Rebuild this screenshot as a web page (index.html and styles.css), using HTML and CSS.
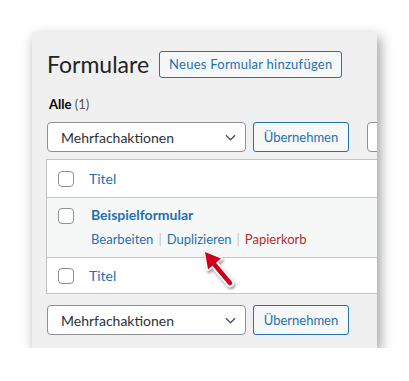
FILE: index.html
```html
<!DOCTYPE html>
<html lang="de">
  <head>
    <meta charset="UTF-8" />
    <meta name="viewport" content="width=device-width, initial-scale=1.0" />
    <title>Formulare</title>
    <link rel="stylesheet" href="styles.css">
  </head>
  <body>
    <div class="page">
      <div class="panel">
        <div class="title-row">
          <h1 class="title">Formulare</h1>
          <a class="title-action" href="#">Neues Formular hinzufügen</a>
        </div>

        <div class="filters">
          <span class="current">Alle</span> <span class="count">(1)</span>
        </div>

        <div class="toolbar">
          <div class="select">
            <span>Mehrfachaktionen</span>
            <svg class="chevron" viewBox="0 0 12 7" fill="none" stroke="currentColor" stroke-width="1.6">
              <path d="M1 1l5 5 5-5" />
            </svg>
          </div>
          <button class="button">Übernehmen</button>
          <div class="cut-box"></div>
        </div>

        <div class="list">
          <div class="list-row list-head">
            <span class="check"></span>
            <a class="column-link" href="#">Titel</a>
          </div>
          <div class="list-row list-item">
            <span class="check"></span>
            <div class="item-body">
              <a class="item-title" href="#">Beispielformular</a>
              <div class="row-actions">
                <a href="#">Bearbeiten</a><span class="sep">|</span><a href="#">Duplizieren</a><span class="sep">|</span><a class="trash" href="#">Papierkorb</a>
              </div>
            </div>
          </div>
          <div class="list-row list-foot">
            <span class="check"></span>
            <a class="column-link" href="#">Titel</a>
          </div>
        </div>

        <div class="toolbar toolbar-bottom">
          <div class="select">
            <span>Mehrfachaktionen</span>
            <svg class="chevron" viewBox="0 0 12 7" fill="none" stroke="currentColor" stroke-width="1.6">
              <path d="M1 1l5 5 5-5" />
            </svg>
          </div>
          <button class="button">Übernehmen</button>
        </div>

        <svg class="pointer" viewBox="0 0 50 50" width="50" height="50">
          <defs>
            <filter id="shade" x="-30%" y="-30%" width="160%" height="160%">
              <feDropShadow dx="1" dy="2" stdDeviation="1.5" flood-color="#000" flood-opacity="0.45" />
            </filter>
          </defs>
          <g filter="url(#shade)">
            <line x1="24" y1="24" x2="40" y2="43" stroke="#fff" stroke-width="8" stroke-linecap="round" />
            <polygon points="15,12 31,18.5 18,29.5" fill="#fff" stroke="#fff" stroke-width="3" stroke-linejoin="round" />
            <line x1="24" y1="24" x2="40" y2="43" stroke="#d0021b" stroke-width="4.5" stroke-linecap="round" />
            <polygon points="15,12 31,18.5 18,29.5" fill="#d0021b" />
          </g>
        </svg>
      </div>
    </div>
  </body>
</html>
```

FILE: styles.css
```css
* {
  box-sizing: border-box;
}

body {
  margin: 0;
  background: #fff;
  font-family: Lato, "Open Sans", sans-serif;
  font-size: 13px;
  color: #1d2327;
}

a {
  color: #2271b1;
  text-decoration: none;
}

.page {
  padding: 32px 0 0 32px;
}

.panel {
  position: relative;
  width: 345px;
  height: 316px;
  padding: 19px 0 0 15px;
  background: #f0f0f1;
  box-shadow: 3px 5px 12px rgba(0, 0, 0, 0.4);
  overflow: hidden;
}

.title-row {
  display: flex;
  align-items: center;
  gap: 10px;
}

.title {
  margin: 0;
  font-size: 23px;
  font-weight: 400;
  line-height: 27px;
}

.title-action {
  height: 27px;
  padding: 0 9px;
  line-height: 25px;
  font-size: 13px;
  letter-spacing: 0.25px;
  border: 1px solid #2271b1;
  border-radius: 3px;
  background: #f6f7f7;
  white-space: nowrap;
}

.filters {
  margin-top: 16px;
  padding-left: 2px;
  line-height: 20px;
}

.filters .current {
  color: #000;
  font-weight: 700;
}

.filters .count {
  color: #50575e;
}

.toolbar {
  display: flex;
  gap: 7px;
  margin-top: 8px;
}

.select {
  flex: none;
  display: flex;
  align-items: center;
  justify-content: space-between;
  width: 199px;
  height: 30px;
  padding: 0 9px 0 13px;
  font-size: 14px;
  color: #2c3338;
  background: #fff;
  border: 1px solid #8c8f94;
  border-radius: 4px;
}

.chevron {
  width: 11px;
  height: 7px;
  color: #50575e;
}

.button {
  flex: none;
  width: 96px;
  height: 30px;
  padding: 0;
  font-family: inherit;
  font-size: 13px;
  color: #2271b1;
  background: #f6f7f7;
  border: 1px solid #2271b1;
  border-radius: 3px;
}

.cut-box {
  flex: none;
  width: 40px;
  height: 30px;
  margin-left: 11px;
  background: #fff;
  border: 1px solid #8c8f94;
  border-radius: 4px;
}

.list {
  width: 360px;
  margin: 7px 0 0 -1px;
  background: #fff;
  border: 1px solid #c3c4c7;
}

.list-row {
  display: flex;
  padding-left: 11px;
}

.list-head {
  align-items: center;
  height: 38px;
  border-bottom: 1px solid #c3c4c7;
}

.list-foot {
  align-items: center;
  height: 36px;
  border-top: 1px solid #c3c4c7;
}

.check {
  flex: none;
  width: 16px;
  height: 16px;
  background: #fff;
  border: 1px solid #8c8f94;
  border-radius: 4px;
}

.column-link {
  margin-left: 15px;
  font-size: 14px;
}

.list-item {
  align-items: flex-start;
  height: 59px;
  padding-top: 10px;
  background: #f6f7f7;
}

.item-body {
  margin: -3px 0 0 17px;
}

.item-title {
  display: block;
  font-size: 14px;
  font-weight: 700;
  line-height: 20px;
  color: #2271b1;
}

.row-actions {
  margin-top: 4px;
  line-height: 20px;
  font-size: 13px;
}

.row-actions .sep {
  margin: 0 5px;
  color: #c3c4c7;
}

.row-actions .trash {
  color: #b32d2e;
}

.toolbar-bottom {
  margin-top: 11px;
}

.pointer {
  position: absolute;
  left: 158px;
  top: 208px;
}
```
